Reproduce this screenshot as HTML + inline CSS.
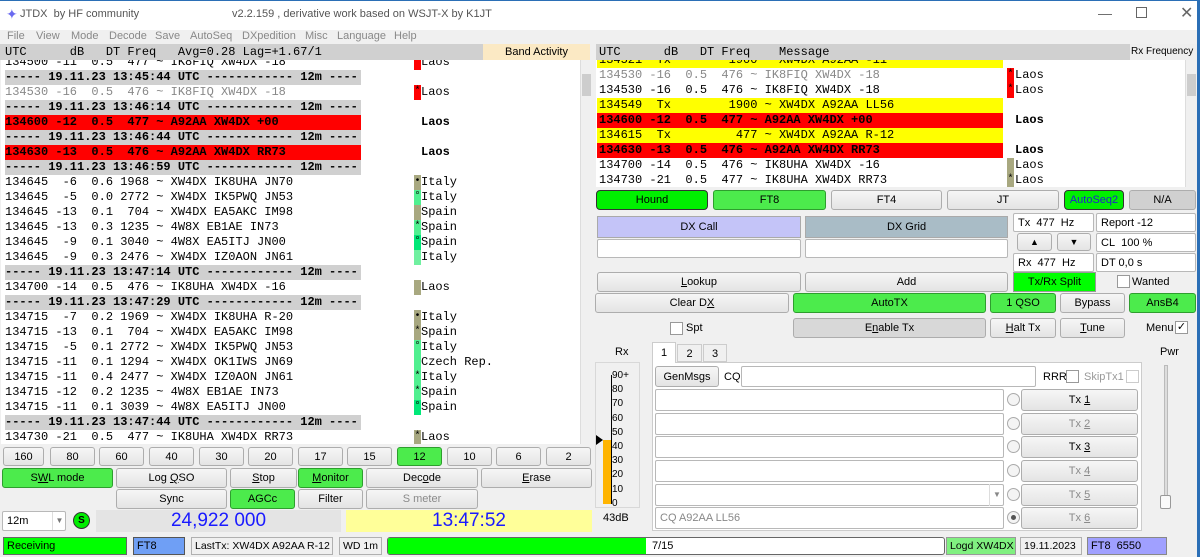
<!DOCTYPE html>
<html><head><meta charset="utf-8"><style>
*{box-sizing:border-box;margin:0;padding:0}
body{width:1200px;height:557px;position:relative;overflow:hidden;background:#f0f0f0;font-family:"Liberation Sans",sans-serif;font-size:11px;color:#000}
.a{position:absolute}
.b{position:absolute;background:linear-gradient(#f6f6f6,#e4e4e4);border:1px solid #adadad;border-radius:3px;text-align:center;font-size:11px;display:flex;align-items:center;justify-content:center;white-space:nowrap}
.g{background:#4ceb4c;border-color:#2e9e2e}
.dis{color:#8a8a8a}
.in{position:absolute;background:#fff;border:1px solid #b8b8b8;border-radius:2px;font-size:11px;display:flex;align-items:center;padding-left:4px;white-space:nowrap}
.mono{font-family:"Liberation Mono",monospace;font-size:12px;white-space:pre}
.row{position:absolute;height:15px;line-height:15px}
.sep{background:#d0d0d0;font-weight:bold}
.red{background:#ff0000;font-weight:bold}
.yel{background:#ffff00}
.mk{position:absolute;width:7px;height:15px;line-height:13px;font-size:10px;text-align:center}
.ct{position:absolute;height:15px;line-height:15px}
.st{position:absolute;top:537px;height:18px;border:1px solid #b0b0b0;font-size:11px;display:flex;align-items:center;padding-left:3px;white-space:nowrap;overflow:hidden}
.cb{position:absolute;width:13px;height:13px;background:#fff;border:1px solid #999}
.rad{position:absolute;width:13px;height:13px;border-radius:50%;border:1px solid #aaa;background:#f4f4f4}
</style></head><body>
<!-- title -->
<div class="a" style="left:0;top:0;width:1200px;height:30px;background:#fff;border-top:1px solid #2b6fb6"></div>
<div class="a" style="left:6px;top:6px;color:#6a6af0;font-size:14px">✦</div>
<div class="a" style="left:20px;top:8px;font-size:11px;color:#555">JTDX&nbsp; by HF community</div>
<div class="a" style="left:232px;top:8px;font-size:11px;color:#555">v2.2.159 , derivative work based on WSJT-X by K1JT</div>
<div class="a" style="left:1098px;top:5px;font-size:14px;color:#666">—</div>
<div class="a" style="left:1136px;top:7px;width:11px;height:11px;border:1px solid #666"></div>
<div class="a" style="left:1180px;top:3px;font-size:16px;color:#666">✕</div>
<div class="a" style="left:1197px;top:0;width:3px;height:557px;background:#2b6fb6"></div>
<!-- menu -->
<div class="a" style="left:0;top:26px;width:1197px;height:17px;color:#888;font-size:11px">
<span class="a" style="left:7px;top:4px">File</span><span class="a" style="left:36px;top:4px">View</span><span class="a" style="left:71px;top:4px">Mode</span><span class="a" style="left:109px;top:4px">Decode</span><span class="a" style="left:155px;top:4px">Save</span><span class="a" style="left:190px;top:4px">AutoSeq</span><span class="a" style="left:242px;top:4px">DXpedition</span><span class="a" style="left:305px;top:4px">Misc</span><span class="a" style="left:337px;top:4px">Language</span><span class="a" style="left:394px;top:4px">Help</span></div>
<!-- left header -->
<div class="a mono" style="left:0;top:44px;width:483px;height:16px;background:#d0d0d0;line-height:16px;padding-left:5px">UTC      dB   DT Freq   Avg=0.28 Lag=+1.67/1</div>
<div class="a" style="left:483px;top:44px;width:107px;height:16px;background:#fbe9c4;text-align:center;line-height:16px">Band Activity</div>
<!-- left decode -->
<div class="a mono" style="left:1px;top:60px;width:591px;height:384px;background:#fff;overflow:hidden">
<div class="a" style="left:0;top:-5px;width:580px;height:400px">
<div class="row" style="top:0;left:4px;width:356px">134500 -11  0.5  477 ~ IK8FIQ XW4DX -18</div><div class="mk" style="top:0;left:413px;background:#f00"></div><div class="ct" style="top:0;left:420px">Laos</div>
<div class="row sep" style="top:15px;left:4px;width:356px">----- 19.11.23 13:45:44 UTC ------------ 12m ----</div>
<div class="row" style="top:30px;left:4px;color:#888">134530 -16  0.5  476 ~ IK8FIQ XW4DX -18</div><div class="mk" style="top:30px;left:413px;background:#f00">*</div><div class="ct" style="top:30px;left:420px">Laos</div>
<div class="row sep" style="top:45px;left:4px;width:356px">----- 19.11.23 13:46:14 UTC ------------ 12m ----</div>
<div class="row red" style="top:60px;left:4px;width:356px">134600 -12  0.5  477 ~ A92AA XW4DX +00</div><div class="ct" style="top:60px;left:420px;font-weight:bold">Laos</div>
<div class="row sep" style="top:75px;left:4px;width:356px">----- 19.11.23 13:46:44 UTC ------------ 12m ----</div>
<div class="row red" style="top:90px;left:4px;width:356px">134630 -13  0.5  476 ~ A92AA XW4DX RR73</div><div class="ct" style="top:90px;left:420px;font-weight:bold">Laos</div>
<div class="row sep" style="top:105px;left:4px;width:356px">----- 19.11.23 13:46:59 UTC ------------ 12m ----</div>
<div class="row" style="top:120px;left:4px">134645  -6  0.6 1968 ~ XW4DX IK8UHA JN70</div><div class="mk" style="top:120px;left:413px;background:#a8a880">•</div><div class="ct" style="top:120px;left:420px">Italy</div>
<div class="row" style="top:135px;left:4px">134645  -5  0.0 2772 ~ XW4DX IK5PWQ JN53</div><div class="mk" style="top:135px;left:413px;background:#50f090">°</div><div class="ct" style="top:135px;left:420px">Italy</div>
<div class="row" style="top:150px;left:4px">134645 -13  0.1  704 ~ XW4DX EA5AKC IM98</div><div class="mk" style="top:150px;left:413px;background:#a8a880"></div><div class="ct" style="top:150px;left:420px">Spain</div>
<div class="row" style="top:165px;left:4px">134645 -13  0.3 1235 ~ 4W8X EB1AE IN73</div><div class="mk" style="top:165px;left:413px;background:#50f090">*</div><div class="ct" style="top:165px;left:420px">Spain</div>
<div class="row" style="top:180px;left:4px">134645  -9  0.1 3040 ~ 4W8X EA5ITJ JN00</div><div class="mk" style="top:180px;left:413px;background:#00e878">°</div><div class="ct" style="top:180px;left:420px">Spain</div>
<div class="row" style="top:195px;left:4px">134645  -9  0.3 2476 ~ XW4DX IZ0AON JN61</div><div class="mk" style="top:195px;left:413px;background:#70f0a0"></div><div class="ct" style="top:195px;left:420px">Italy</div>
<div class="row sep" style="top:210px;left:4px;width:356px">----- 19.11.23 13:47:14 UTC ------------ 12m ----</div>
<div class="row" style="top:225px;left:4px">134700 -14  0.5  476 ~ IK8UHA XW4DX -16</div><div class="mk" style="top:225px;left:413px;background:#a8a880"></div><div class="ct" style="top:225px;left:420px">Laos</div>
<div class="row sep" style="top:240px;left:4px;width:356px">----- 19.11.23 13:47:29 UTC ------------ 12m ----</div>
<div class="row" style="top:255px;left:4px">134715  -7  0.2 1969 ~ XW4DX IK8UHA R-20</div><div class="mk" style="top:255px;left:413px;background:#a8a880">•</div><div class="ct" style="top:255px;left:420px">Italy</div>
<div class="row" style="top:270px;left:4px">134715 -13  0.1  704 ~ XW4DX EA5AKC IM98</div><div class="mk" style="top:270px;left:413px;background:#a8a880">*</div><div class="ct" style="top:270px;left:420px">Spain</div>
<div class="row" style="top:285px;left:4px">134715  -5  0.1 2772 ~ XW4DX IK5PWQ JN53</div><div class="mk" style="top:285px;left:413px;background:#50f090">°</div><div class="ct" style="top:285px;left:420px">Italy</div>
<div class="row" style="top:300px;left:4px">134715 -11  0.1 1294 ~ XW4DX OK1IWS JN69</div><div class="mk" style="top:300px;left:413px;background:#50f090"></div><div class="ct" style="top:300px;left:420px">Czech Rep.</div>
<div class="row" style="top:315px;left:4px">134715 -11  0.4 2477 ~ XW4DX IZ0AON JN61</div><div class="mk" style="top:315px;left:413px;background:#50f090">*</div><div class="ct" style="top:315px;left:420px">Italy</div>
<div class="row" style="top:330px;left:4px">134715 -12  0.2 1235 ~ 4W8X EB1AE IN73</div><div class="mk" style="top:330px;left:413px;background:#50f090">*</div><div class="ct" style="top:330px;left:420px">Spain</div>
<div class="row" style="top:345px;left:4px">134715 -11  0.1 3039 ~ 4W8X EA5ITJ JN00</div><div class="mk" style="top:345px;left:413px;background:#00e878">°</div><div class="ct" style="top:345px;left:420px">Spain</div>
<div class="row sep" style="top:360px;left:4px;width:356px">----- 19.11.23 13:47:44 UTC ------------ 12m ----</div>
<div class="row" style="top:375px;left:4px">134730 -21  0.5  477 ~ IK8UHA XW4DX RR73</div><div class="mk" style="top:375px;left:413px;background:#a8a880">*</div><div class="ct" style="top:375px;left:420px">Laos</div>
</div>
<div class="a" style="left:579px;top:0;width:12px;height:384px;background:#f0f0f0;border-left:1px solid #ddd"></div>
<div class="a" style="left:581px;top:14px;width:9px;height:22px;background:#cdcdcd"></div>
</div>
<!-- right header -->
<div class="a mono" style="left:596px;top:44px;width:534px;height:16px;background:#d0d0d0;line-height:16px;padding-left:3px">UTC      dB   DT Freq    Message</div>
<div class="a" style="left:1130px;top:44px;width:67px;height:16px;background:#eee;line-height:16px;font-size:10px;white-space:nowrap;overflow:hidden;padding-left:1px">Rx Frequency</div>
<!-- right decode -->
<div class="a mono" style="left:596px;top:60px;width:601px;height:127px;background:#fff;overflow:hidden">
<div class="a" style="left:0;top:-7px;width:600px;height:140px">
<div class="row yel" style="top:0;left:1px;width:406px;padding-left:2px">134521  Tx        1900 ~ XW4DX A92AA -11</div>
<div class="row" style="top:15px;left:3px;color:#888">134530 -16  0.5  476 ~ IK8FIQ XW4DX -18</div><div class="mk" style="top:15px;left:411px;background:#f00">*</div><div class="ct" style="top:15px;left:419px">Laos</div>
<div class="row" style="top:30px;left:3px">134530 -16  0.5  476 ~ IK8FIQ XW4DX -18</div><div class="mk" style="top:30px;left:411px;background:#f00">*</div><div class="ct" style="top:30px;left:419px">Laos</div>
<div class="row yel" style="top:45px;left:1px;width:406px;padding-left:2px">134549  Tx        1900 ~ XW4DX A92AA LL56</div>
<div class="row red" style="top:60px;left:1px;width:406px;padding-left:2px">134600 -12  0.5  477 ~ A92AA XW4DX +00</div><div class="ct" style="top:60px;left:419px;font-weight:bold">Laos</div>
<div class="row yel" style="top:75px;left:1px;width:406px;padding-left:2px">134615  Tx         477 ~ XW4DX A92AA R-12</div>
<div class="row red" style="top:90px;left:1px;width:406px;padding-left:2px">134630 -13  0.5  476 ~ A92AA XW4DX RR73</div><div class="ct" style="top:90px;left:419px;font-weight:bold">Laos</div>
<div class="row" style="top:105px;left:3px">134700 -14  0.5  476 ~ IK8UHA XW4DX -16</div><div class="mk" style="top:105px;left:411px;background:#a8a880"></div><div class="ct" style="top:105px;left:419px">Laos</div>
<div class="row" style="top:120px;left:3px">134730 -21  0.5  477 ~ IK8UHA XW4DX RR73</div><div class="mk" style="top:120px;left:411px;background:#a8a880">*</div><div class="ct" style="top:120px;left:419px">Laos</div>
</div>
<div class="a" style="left:589px;top:0;width:12px;height:127px;background:#f0f0f0;border-left:1px solid #ddd"></div>
<div class="a" style="left:591px;top:14px;width:9px;height:22px;background:#cdcdcd"></div>
</div>
<!-- right controls -->
<div class="b" style="left:596px;top:190px;width:112px;height:20px;background:#00f000;border:1px solid #333;border-radius:4px">Hound</div>
<div class="b g" style="left:713px;top:190px;width:113px;height:20px">FT8</div>
<div class="b" style="left:831px;top:190px;width:111px;height:20px">FT4</div>
<div class="b" style="left:947px;top:190px;width:112px;height:20px">JT</div>
<div class="b" style="left:1064px;top:190px;width:60px;height:20px;background:#00f000;border-color:#333;color:#22c;border-radius:4px">AutoSeq2</div>
<div class="b" style="left:1129px;top:190px;width:67px;height:20px;background:#d0d0d0">N/A</div>
<div class="a" style="left:597px;top:216px;width:204px;height:22px;background:#c4c4f8;border:1px solid #aaa;text-align:center;line-height:20px">DX Call</div>
<div class="a" style="left:805px;top:216px;width:203px;height:22px;background:#a9bcc6;border:1px solid #aaa;text-align:center;line-height:20px">DX Grid</div>
<div class="in" style="left:597px;top:239px;width:204px;height:19px"></div>
<div class="in" style="left:805px;top:239px;width:203px;height:19px"></div>
<div class="in" style="left:1013px;top:213px;width:81px;height:19px">Tx&nbsp; 477&nbsp; Hz</div>
<div class="in" style="left:1096px;top:213px;width:100px;height:19px">Report -12</div>
<div class="b" style="left:1017px;top:233px;width:35px;height:18px;font-size:9px">▲</div>
<div class="b" style="left:1057px;top:233px;width:34px;height:18px;font-size:9px">▼</div>
<div class="in" style="left:1096px;top:233px;width:100px;height:19px">CL&nbsp; 100 %</div>
<div class="in" style="left:1013px;top:253px;width:81px;height:19px">Rx&nbsp; 477&nbsp; Hz</div>
<div class="in" style="left:1096px;top:253px;width:100px;height:19px">DT 0,0 s</div>
<div class="b" style="left:597px;top:272px;width:204px;height:20px"><span><u>L</u>ookup</span></div>
<div class="b" style="left:805px;top:272px;width:203px;height:20px">Add</div>
<div class="a" style="left:1013px;top:272px;width:83px;height:20px;background:#00ff00;border:1px solid #999;text-align:center;line-height:18px">Tx/Rx Split</div>
<div class="cb" style="left:1117px;top:275px"></div><div class="a" style="left:1132px;top:276px">Wanted</div>
<div class="b" style="left:595px;top:293px;width:194px;height:20px"><span>Clear D<u>X</u></span></div>
<div class="b g" style="left:793px;top:293px;width:193px;height:20px">AutoTX</div>
<div class="b g" style="left:990px;top:293px;width:66px;height:20px">1 QSO</div>
<div class="b" style="left:1060px;top:293px;width:65px;height:20px">Bypass</div>
<div class="b g" style="left:1129px;top:293px;width:67px;height:20px">AnsB4</div>
<div class="cb" style="left:670px;top:322px"></div><div class="a" style="left:686px;top:322px">Spt</div>
<div class="b" style="left:793px;top:318px;width:193px;height:20px;background:#d8d8d8"><span>E<u>n</u>able Tx</span></div>
<div class="b" style="left:990px;top:318px;width:66px;height:20px"><span><u>H</u>alt Tx</span></div>
<div class="b" style="left:1060px;top:318px;width:65px;height:20px"><span><u>T</u>une</span></div>
<div class="a" style="left:1146px;top:322px">Menu</div><div class="cb" style="left:1175px;top:321px;font-size:11px;line-height:11px;text-align:center">✓</div>
<!-- Rx meter -->
<div class="a" style="left:615px;top:346px">Rx</div>
<div class="a" style="left:595px;top:362px;width:45px;height:146px;background:#f0f0f0;border:1px solid #d8d8d8"></div>
<div class="a" style="left:603px;top:440px;width:8px;height:64px;background:#ffb400"></div>
<div class="a" style="left:611px;top:375px;width:1px;height:129px;background:#000"></div>
<div class="a" style="left:596px;top:435px;width:0;height:0;border-top:5px solid transparent;border-bottom:5px solid transparent;border-left:7px solid #000"></div>
<div class="a" style="left:612px;top:369px;font-size:10px;line-height:14.2px">90+<br>80<br>70<br>60<br>50<br>40<br>30<br>20<br>10<br>0</div>
<div class="a" style="left:603px;top:512px">43dB</div>
<!-- tabs -->
<div class="a" style="left:652px;top:362px;width:490px;height:169px;background:#fff;border:1px solid #ccc"></div>
<div class="a" style="left:652px;top:342px;width:24px;height:21px;background:#fff;border:1px solid #ccc;border-bottom:none;text-align:center;line-height:20px">1</div>
<div class="a" style="left:677px;top:344px;width:25px;height:18px;background:#f0f0f0;border:1px solid #ccc;text-align:center;line-height:18px">2</div>
<div class="a" style="left:703px;top:344px;width:24px;height:18px;background:#f0f0f0;border:1px solid #ccc;text-align:center;line-height:18px">3</div>
<div class="b" style="left:655px;top:366px;width:64px;height:21px">GenMsgs</div>
<div class="a" style="left:724px;top:371px">CQ</div>
<div class="in" style="left:741px;top:366px;width:295px;height:21px"></div>
<div class="a" style="left:1043px;top:371px">RRR</div><div class="cb" style="left:1066px;top:370px"></div>
<div class="a" style="left:1084px;top:371px;color:#999">SkipTx1</div><div class="cb" style="left:1126px;top:370px;border-color:#ccc"></div>
<div class="in" style="left:655px;top:389px;width:349px;height:22px"></div>
<div class="in" style="left:655px;top:413px;width:349px;height:22px"></div>
<div class="in" style="left:655px;top:436px;width:349px;height:22px"></div>
<div class="in" style="left:655px;top:460px;width:349px;height:22px"></div>
<div class="in" style="left:655px;top:484px;width:349px;height:22px"></div>
<div class="a" style="left:989px;top:484px;width:15px;height:22px;border-left:1px solid #ddd;font-size:8px;color:#888;text-align:center;line-height:22px">▼</div>
<div class="in" style="left:655px;top:507px;width:349px;height:22px;color:#888">CQ A92AA LL56</div>
<div class="rad" style="left:1007px;top:393px"></div><div class="rad" style="left:1007px;top:417px"></div><div class="rad" style="left:1007px;top:440px"></div><div class="rad" style="left:1007px;top:464px"></div><div class="rad" style="left:1007px;top:488px"></div>
<div class="rad" style="left:1007px;top:511px"><div class="a" style="left:3px;top:3px;width:5px;height:5px;border-radius:50%;background:#555"></div></div>
<div class="b" style="left:1021px;top:389px;width:117px;height:22px"><span>Tx <u>1</u></span></div>
<div class="b dis" style="left:1021px;top:413px;width:117px;height:22px"><span>Tx <u>2</u></span></div>
<div class="b" style="left:1021px;top:436px;width:117px;height:22px"><span>Tx <u>3</u></span></div>
<div class="b dis" style="left:1021px;top:460px;width:117px;height:22px"><span>Tx <u>4</u></span></div>
<div class="b dis" style="left:1021px;top:484px;width:117px;height:22px"><span>Tx <u>5</u></span></div>
<div class="b dis" style="left:1021px;top:507px;width:117px;height:22px"><span>Tx <u>6</u></span></div>
<div class="a" style="left:1160px;top:346px">Pwr</div>
<div class="a" style="left:1164px;top:365px;width:4px;height:140px;background:#ddd;border:1px solid #bbb"></div>
<div class="a" style="left:1160px;top:495px;width:11px;height:14px;background:#fafafa;border:1px solid #999;border-radius:2px"></div>
<!-- band buttons -->
<div class="b" style="left:3px;top:447px;width:41px;height:19px">160</div>
<div class="b" style="left:50px;top:447px;width:45px;height:19px">80</div>
<div class="b" style="left:99px;top:447px;width:45px;height:19px">60</div>
<div class="b" style="left:149px;top:447px;width:45px;height:19px">40</div>
<div class="b" style="left:199px;top:447px;width:45px;height:19px">30</div>
<div class="b" style="left:248px;top:447px;width:45px;height:19px">20</div>
<div class="b" style="left:298px;top:447px;width:45px;height:19px">17</div>
<div class="b" style="left:347px;top:447px;width:45px;height:19px">15</div>
<div class="b g" style="left:397px;top:447px;width:45px;height:19px">12</div>
<div class="b" style="left:447px;top:447px;width:45px;height:19px">10</div>
<div class="b" style="left:496px;top:447px;width:45px;height:19px">6</div>
<div class="b" style="left:546px;top:447px;width:45px;height:19px">2</div>
<div class="b g" style="left:2px;top:468px;width:111px;height:20px"><span>S<u>W</u>L mode</span></div>
<div class="b" style="left:116px;top:468px;width:111px;height:20px"><span>Log <u>Q</u>SO</span></div>
<div class="b" style="left:230px;top:468px;width:67px;height:20px"><span><u>S</u>top</span></div>
<div class="b g" style="left:298px;top:468px;width:65px;height:20px"><span><u>M</u>onitor</span></div>
<div class="b" style="left:366px;top:468px;width:112px;height:20px"><span>Dec<u>o</u>de</span></div>
<div class="b" style="left:481px;top:468px;width:111px;height:20px"><span><u>E</u>rase</span></div>
<div class="b" style="left:116px;top:489px;width:111px;height:20px">Sync</div>
<div class="b g" style="left:230px;top:489px;width:65px;height:20px">AGCc</div>
<div class="b" style="left:298px;top:489px;width:65px;height:20px">Filter</div>
<div class="b dis" style="left:366px;top:489px;width:112px;height:20px">S meter</div>
<div class="in" style="left:2px;top:511px;width:64px;height:20px">12m<span class="a" style="left:49px;top:0;width:14px;height:18px;border-left:1px solid #ddd;font-size:8px;color:#777;text-align:center;line-height:18px">▼</span></div>
<div class="a" style="left:73px;top:512px;width:17px;height:17px;border-radius:50%;background:#00ee00;border:1px solid #333;text-align:center;font-weight:bold;font-size:10px;line-height:15px">S</div>
<div class="a" style="left:96px;top:510px;width:245px;height:22px;background:#e4e4e4;color:#1a1aff;font-size:19px;text-align:center;line-height:22px">24,922 000</div>
<div class="a" style="left:346px;top:510px;width:246px;height:22px;background:#ffff99;color:#1a1aff;font-size:19px;text-align:center;line-height:22px">13:47:52</div>
<!-- status bar -->
<div class="st" style="left:3px;width:124px;background:#00ff00;border-color:#666">Receiving</div>
<div class="st" style="left:133px;width:52px;background:#6f9ff5;border-color:#555">FT8</div>
<div class="st" style="left:191px;width:142px;font-size:10.5px">LastTx: XW4DX A92AA R-12</div>
<div class="st" style="left:339px;width:43px;font-size:10.5px">WD 1m</div>
<div class="a" style="left:387px;top:537px;width:558px;height:18px;background:#fff;border:1px solid #666;border-radius:3px;overflow:hidden"><div class="a" style="left:0;top:0;width:258px;height:16px;background:#00ff00"></div><span class="a" style="left:264px;top:2px">7/15</span></div>
<div class="st" style="left:946px;width:70px;background:#80f080;border-color:#999;font-size:10.5px">Logd XW4DX</div>
<div class="st" style="left:1020px;width:62px;font-size:10.5px">19.11.2023</div>
<div class="st" style="left:1087px;width:80px;background:#a0a0ff;border-color:#888">FT8&nbsp; 6550</div>
</body></html>
